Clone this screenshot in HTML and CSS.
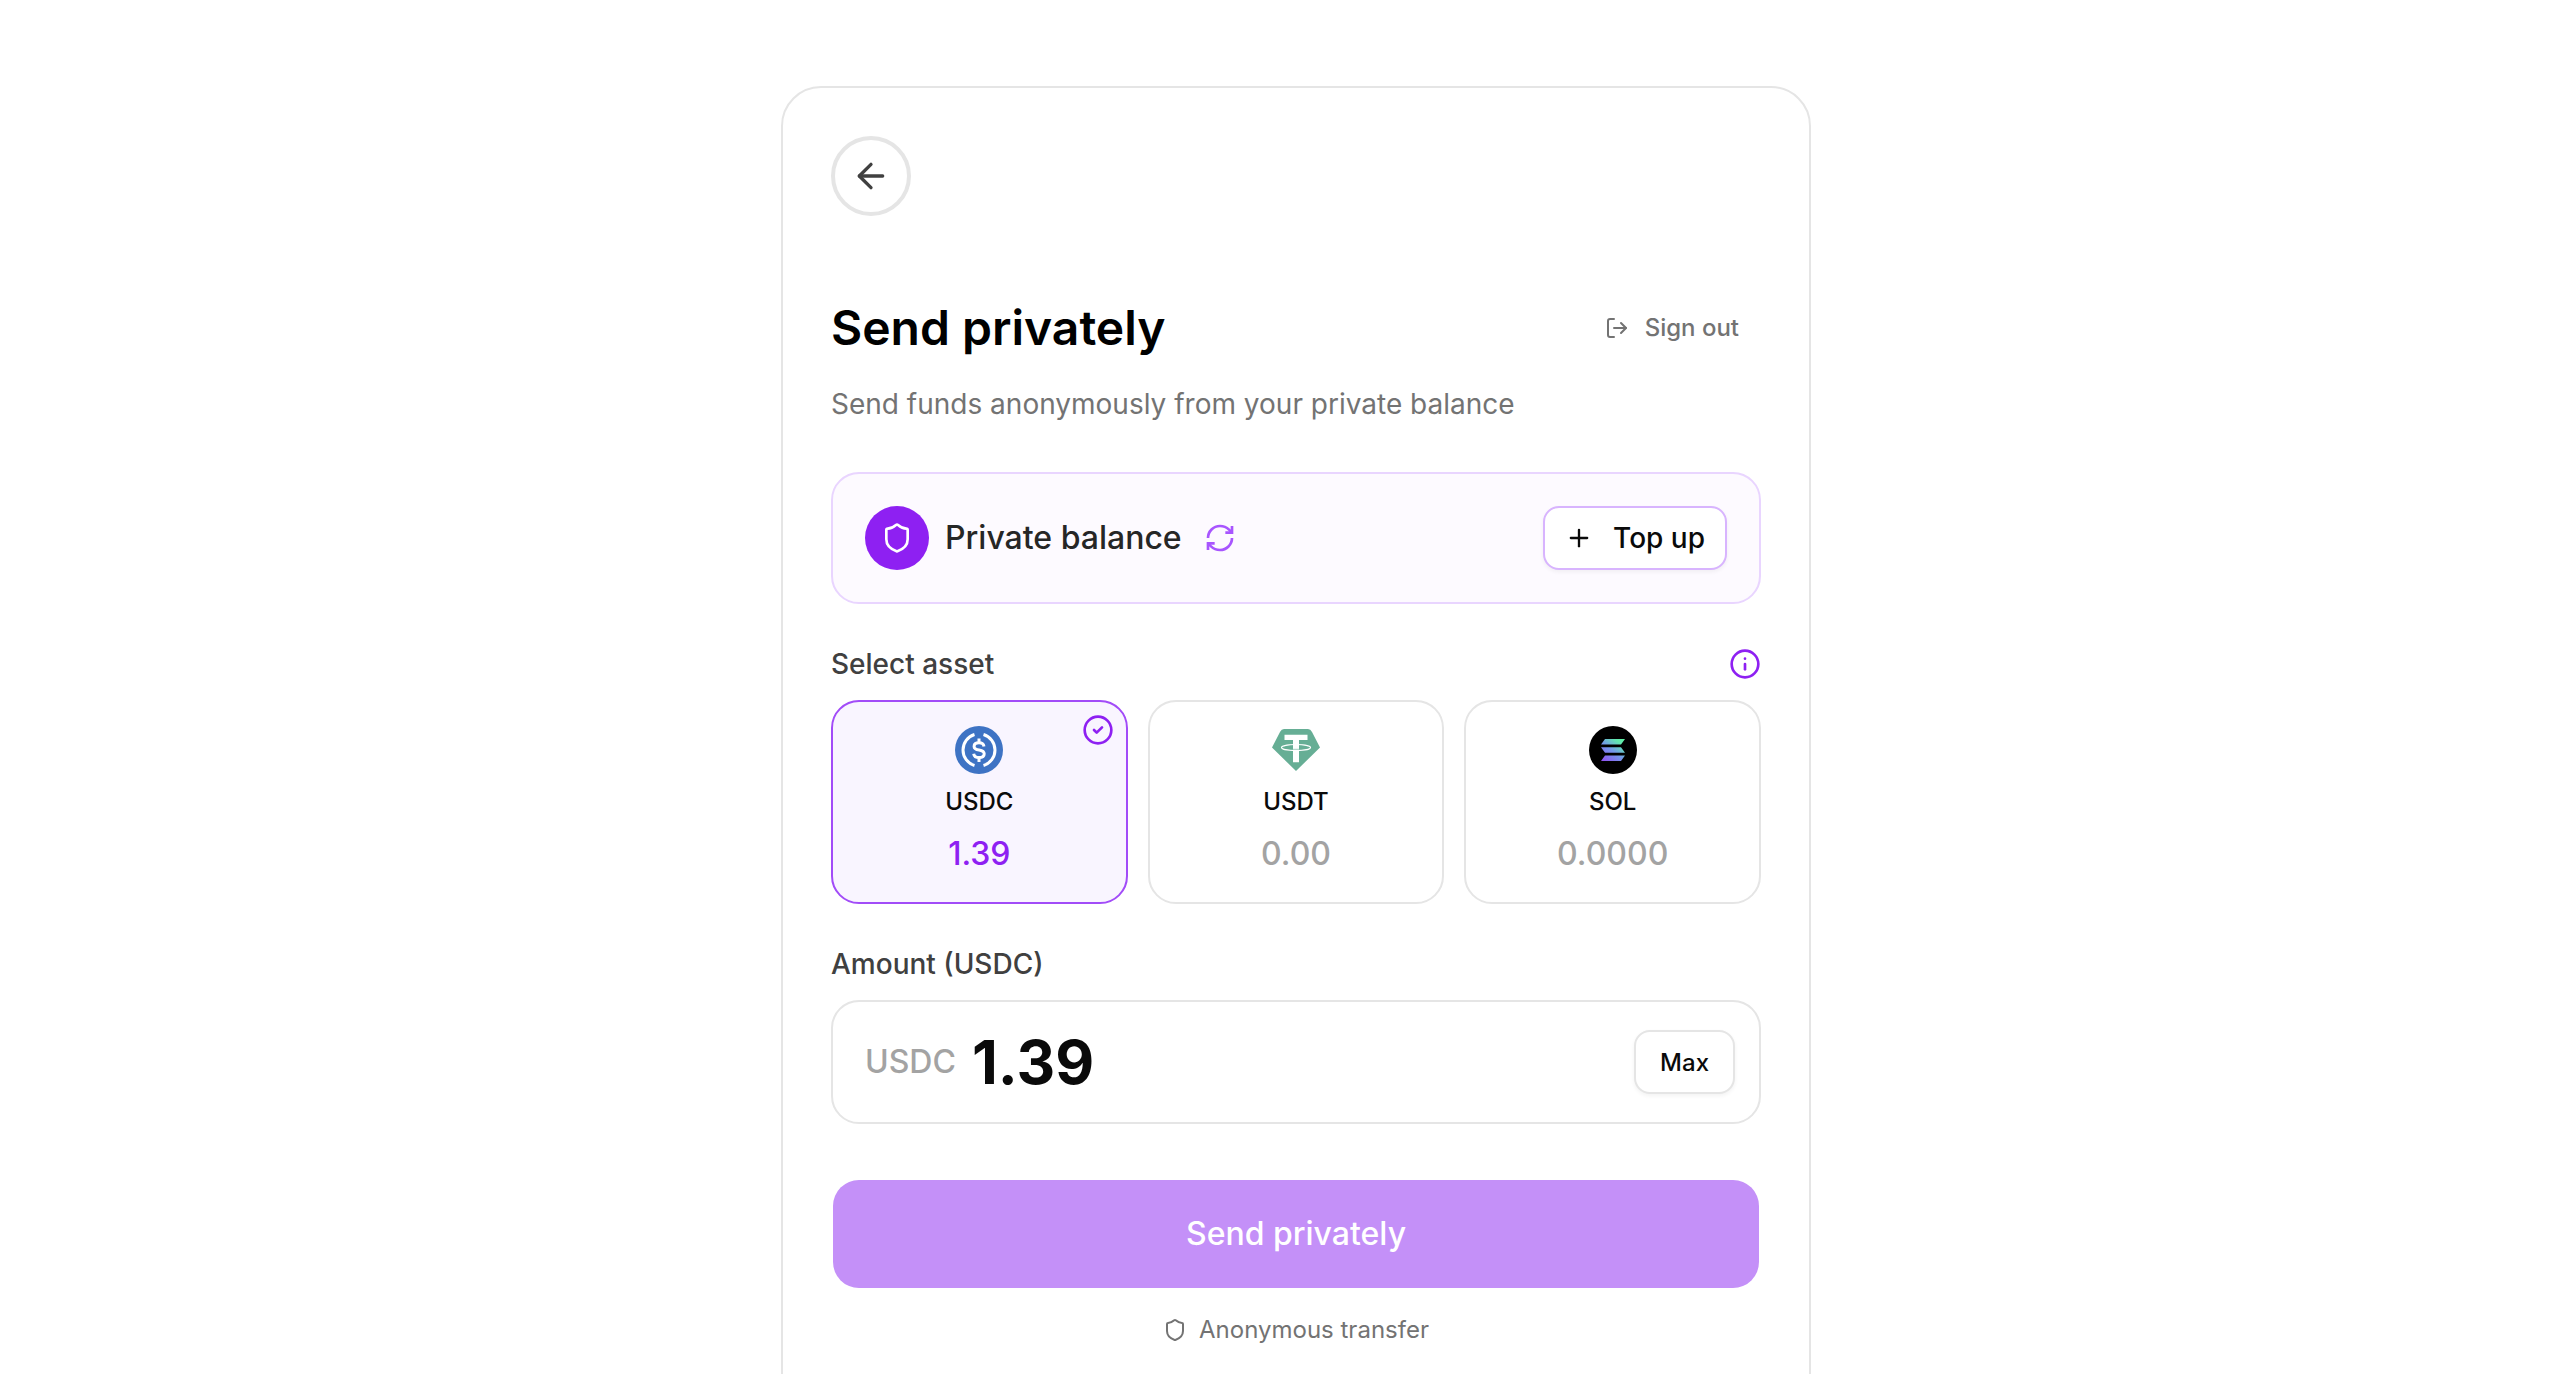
FILE: index.html
```
<!DOCTYPE html>
<html lang="en">
<head>
    <meta charset="UTF-8">
    <meta name="viewport" content="width=device-width, initial-scale=1.0">
    <title>Send privately</title>
    <link rel="stylesheet" href="styles.css">
</head>
<body>

<main class="page">
    <section class="card">
        <button type="button" class="back-btn" aria-label="Back">
            <svg class="icon icon-lg" viewBox="0 0 24 24"><path d="m12 19-7-7 7-7"/><path d="M19 12H5"/></svg>
        </button>

        <header class="header">
            <h1>Send privately</h1>
            <button type="button" class="sign-out">
                <svg class="icon icon-sm" viewBox="0 0 24 24"><path d="M9 21H5a2 2 0 0 1-2-2V5a2 2 0 0 1 2-2h4"/><path d="m16 17 5-5-5-5"/><path d="M21 12H9"/></svg>
                Sign out
            </button>
        </header>
        <p class="subtitle">Send funds anonymously from your private balance</p>

        <div class="balance">
            <span class="balance-icon">
                <svg class="icon" viewBox="0 0 24 24"><path d="M20 13c0 5-3.5 7.5-7.66 8.95a1 1 0 0 1-.67-.01C7.5 20.5 4 18 4 13V6a1 1 0 0 1 1-1c2 0 4.5-1.2 6.24-2.72a1.17 1.17 0 0 1 1.52 0C14.51 3.81 17 5 19 5a1 1 0 0 1 1 1z"/></svg>
            </span>
            <span class="balance-title">Private balance</span>
            <button type="button" class="refresh" aria-label="Refresh balance">
                <svg class="icon" viewBox="0 0 24 24"><path d="M3 12a9 9 0 0 1 9-9 9.75 9.75 0 0 1 6.74 2.74L21 8"/><path d="M21 3v5h-5"/><path d="M21 12a9 9 0 0 1-9 9 9.75 9.75 0 0 1-6.74-2.74L3 16"/><path d="M8 16H3v5"/></svg>
            </button>
            <button type="button" class="btn top-up">
                <svg class="icon icon-md" viewBox="0 0 24 24"><path d="M5 12h14"/><path d="M12 5v14"/></svg>
                Top up
            </button>
        </div>

        <div class="label-row">
            <h2 class="label" id="asset-label">Select asset</h2>
            <button type="button" class="info" aria-label="About assets">
                <svg class="icon" viewBox="0 0 24 24"><circle cx="12" cy="12" r="10"/><path d="M12 12v4"/><path d="M12 8h.01"/></svg>
            </button>
        </div>
        <div class="assets" role="group" aria-labelledby="asset-label">
            <button type="button" class="asset selected" aria-pressed="true">
                <svg class="icon asset-check" viewBox="0 0 24 24"><circle cx="12" cy="12" r="10"/><path d="m9 12 2 2 4-4"/></svg>
                <svg class="coin" viewBox="0 0 48 48">
                    <circle cx="24" cy="24" r="24" fill="#3e73c4"/>
                    <g fill="none" stroke="#fff" stroke-width="3">
                        <path d="M19.5 8.5a16.2 16.2 0 0 0 0 31"/>
                        <path d="M28.5 8.5a16.2 16.2 0 0 1 0 31"/>
                        <path d="M29 20.5c-.4-2.5-2.2-3.7-5-3.7s-4.900 1.3-4.900 3.6c0 2.5 2.2 3.2 5 3.6 2.900.5 5.1 1.2 5.1 3.8 0 2.4-2.2 3.8-5.1 3.8-3 0-5-1.2-5.4-3.900"/>
                        <path d="M24 12.5V17M24 31.5V36"/>
                    </g>
                </svg>
                <span class="asset-name">USDC</span>
                <span class="asset-amount">1.39</span>
            </button>
            <button type="button" class="asset" aria-pressed="false">
                <svg class="coin" viewBox="0 0 48 48">
                    <path fill="#66ae95" d="M12 3h24q2.5 0 4 3l8 15.5L24 45 0 21.5 8 6q1.5-3 4-3z"/>
                    <path fill="#fff" d="M12.5 8.7h23V14H27v22.3h-6V14h-8.5z"/>
                    <ellipse cx="24" cy="21.5" rx="14.5" ry="3" fill="none" stroke="#fff" stroke-width="1.2"/>
                    <path d="M21 23.3h6" stroke="#66ae95" stroke-width="0.6"/>
                </svg>
                <span class="asset-name">USDT</span>
                <span class="asset-amount">0.00</span>
            </button>
            <button type="button" class="asset" aria-pressed="false">
                <svg class="coin" viewBox="0 0 48 48">
                    <defs>
                        <linearGradient id="sol" gradientUnits="userSpaceOnUse" x1="14" y1="36" x2="32" y2="13">
                            <stop offset="0" stop-color="#9250f2"/>
                            <stop offset="0.5" stop-color="#7397ea"/>
                            <stop offset="0.85" stop-color="#62e3b2"/>
                            <stop offset="1" stop-color="#5ff0a5"/>
                        </linearGradient>
                    </defs>
                    <circle cx="24" cy="24" r="24" fill="#000"/>
                    <path fill="url(#sol)" d="M16 13h20l-4 5.5H12zM12 21.3h20l4 5.5H16zM16 29.5h20L32 35H12z"/>
                </svg>
                <span class="asset-name">SOL</span>
                <span class="asset-amount">0.0000</span>
            </button>
        </div>

        <div class="label-row">
            <label class="label" for="amount">Amount (USDC)</label>
        </div>
        <div class="amount-box">
            <span class="currency">USDC</span>
            <input type="text" id="amount" class="amount-input" inputmode="decimal" value="1.39">
            <button type="button" class="btn max">Max</button>
        </div>

        <button type="submit" class="send">Send privately</button>

        <p class="note">
            <svg class="icon icon-sm" viewBox="0 0 24 24"><path d="M20 13c0 5-3.5 7.5-7.66 8.95a1 1 0 0 1-.67-.01C7.5 20.5 4 18 4 13V6a1 1 0 0 1 1-1c2 0 4.5-1.2 6.24-2.72a1.17 1.17 0 0 1 1.52 0C14.51 3.81 17 5 19 5a1 1 0 0 1 1 1z"/></svg>
            Anonymous transfer
        </p>
    </section>
</main>

</body>
</html>
```

FILE: styles.css
```
* {
    box-sizing: border-box;
}
body {
    margin: 0;
    font-family: Inter, "Liberation Sans", sans-serif;
    background-color: #fff;
    color: #0a0a0a;
}
h1, h2, p {
    margin: 0;
}
button, input {
    font-family: inherit;
    color: inherit;
    margin: 0;
    padding: 0;
    border: 0;
    background: none;
}
button {
    cursor: pointer;
}
.page {
    display: flex;
    justify-content: center;
    height: 100vh;
    overflow: hidden;
    padding: 86px 0 0 20px;
}
.card {
    width: 100%;
    max-width: 1030px;
    height: max-content;
    padding: 48px 48px 96px;
    border: 2px solid #e5e5e5;
    border-radius: 40px;
}

/* icons */
.icon {
    display: block;
    flex: none;
    width: 32px;
    height: 32px;
    fill: none;
    stroke: currentColor;
    stroke-width: 2;
    stroke-linecap: round;
    stroke-linejoin: round;
}
.icon-sm {
    width: 24px;
    height: 24px;
}
.icon-md {
    width: 28px;
    height: 28px;
}
.icon-lg {
    width: 40px;
    height: 40px;
}

/* header */
.back-btn {
    display: flex;
    align-items: center;
    justify-content: center;
    width: 80px;
    height: 80px;
    border: 4px solid #e5e5e5;
    border-radius: 50%;
    color: #404040;
}
.header {
    display: flex;
    align-items: center;
    justify-content: space-between;
    margin-top: 80px;
}
h1 {
    font-size: 48px;
    line-height: 64px;
    font-weight: 600;
    color: #000;
}
.sign-out {
    display: flex;
    align-items: center;
    gap: 16px;
    padding: 0 22px;
    font-size: 24px;
    line-height: 36px;
    font-weight: 500;
    color: #737373;
}
.subtitle {
    margin-top: 24px;
    font-size: 28px;
    line-height: 40px;
    color: #737373;
}

/* private balance */
.balance {
    display: flex;
    align-items: center;
    margin-top: 48px;
    padding: 32px;
    border: 2px solid #e9d5ff;
    border-radius: 28px;
    background-color: #fdfaff;
}
.balance-icon {
    display: flex;
    align-items: center;
    justify-content: center;
    width: 64px;
    height: 64px;
    border-radius: 50%;
    background-color: #8e20f2;
    color: #fff;
}
.balance-title {
    margin-left: 16px;
    font-size: 32px;
    line-height: 48px;
    font-weight: 500;
    color: #262626;
}
.refresh {
    margin-left: 22px;
    color: #a855ff;
}
.refresh .icon {
    stroke-linecap: butt;
    stroke-linejoin: miter;
}
.btn {
    display: flex;
    align-items: center;
    height: 64px;
    border: 2px solid #e5e5e5;
    border-radius: 16px;
    background-color: #fff;
    box-shadow: 0 2px 4px rgba(0, 0, 0, 0.05);
    font-weight: 500;
}
.top-up {
    gap: 20px;
    margin-left: auto;
    padding: 0 20px;
    border-color: #d8b4fe;
    font-size: 28px;
}

/* assets */
.label-row {
    display: flex;
    align-items: center;
    justify-content: space-between;
    margin: 40px 0 16px;
}
.label {
    font-size: 28px;
    line-height: 40px;
    font-weight: 500;
    color: #404040;
}
.info {
    color: #8e20f2;
}
.assets {
    display: grid;
    grid-template-columns: repeat(3, 1fr);
    gap: 20px;
}
.asset {
    position: relative;
    display: flex;
    flex-direction: column;
    align-items: center;
    padding: 24px;
    border: 2px solid #e5e5e5;
    border-radius: 28px;
}
.asset.selected {
    border-color: #a24cf8;
    background-color: #f9f5ff;
}
.asset-check {
    position: absolute;
    top: 12px;
    right: 12px;
    color: #8e20f2;
}
.coin {
    display: block;
    width: 48px;
    height: 48px;
}
.asset-name {
    margin: 10px 0;
    font-size: 24px;
    line-height: 36px;
    font-weight: 500;
}
.asset-amount {
    font-size: 32px;
    line-height: 48px;
    font-weight: 500;
    color: #a3a3a3;
}
.selected .asset-amount {
    color: #8e20f2;
}

/* amount */
.amount-box {
    display: flex;
    align-items: center;
    gap: 16px;
    padding: 24px 24px 24px 32px;
    border: 2px solid #e5e5e5;
    border-radius: 28px;
}
.currency {
    font-size: 32px;
    line-height: 48px;
    font-weight: 500;
    color: #a3a3a3;
}
.amount-input {
    flex: 1;
    min-width: 0;
    height: 72px;
    font-size: 60px;
    font-weight: 700;
    outline: none;
}
.max {
    padding: 0 24px;
    font-size: 24px;
}
.send {
    display: block;
    width: calc(100% - 4px);
    margin: 56px 2px 0;
    padding: 30px;
    border-radius: 26px;
    background-color: #c490f8;
    color: #fff;
    font-size: 32px;
    line-height: 48px;
    font-weight: 500;
}
.note {
    display: flex;
    align-items: center;
    justify-content: center;
    gap: 12px;
    margin-top: 24px;
    font-size: 24px;
    line-height: 36px;
    color: #737373;
}
```
